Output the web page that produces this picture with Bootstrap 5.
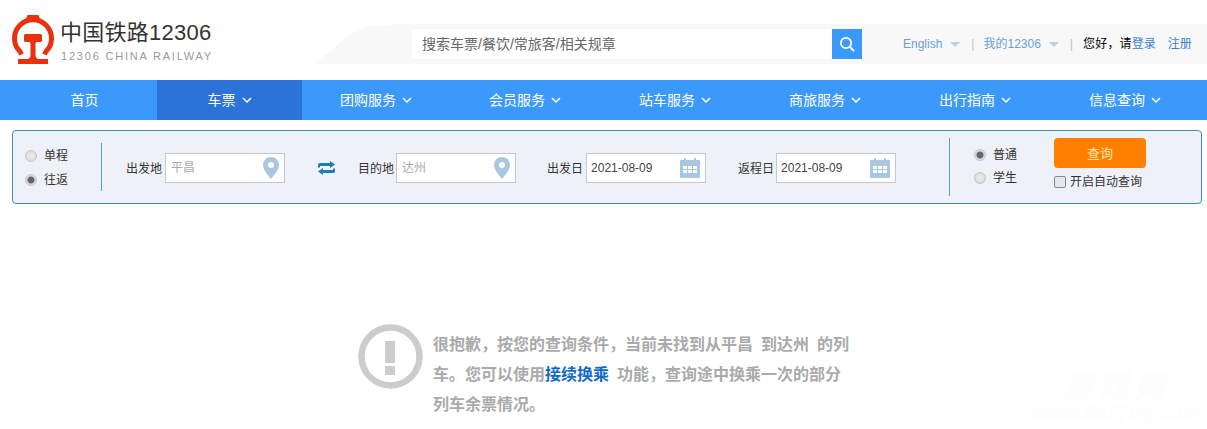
<!DOCTYPE html>
<html lang="zh">
<head>
<meta charset="utf-8">
<title>中国铁路12306</title>
<link href="https://cdn.jsdelivr.net/npm/bootstrap@5.3.0/dist/css/bootstrap.min.css" rel="stylesheet">
<style>
html,body{height:429px;overflow:hidden}
body{font-family:"Liberation Sans","Noto Sans CJK SC",sans-serif;font-size:12px;color:#333;background:#fff;position:relative}
.hdr{height:80px;padding-left:12px}
.brand-mark{width:42px;height:50px;flex:none;margin-top:15px}
.brand-txt{margin-left:7px;width:162px;flex:none;padding-top:20px}
.brand-cn{font-size:22px;line-height:26px;color:#333;letter-spacing:.25px;margin-left:-1px}
.brand-en{font-size:11px;line-height:14px;letter-spacing:1.8px;color:#9a9a9a;margin-top:3px;white-space:nowrap}
.band{margin-left:89px;flex:1;height:40px;padding-left:100px;position:relative}
.band-bg{position:absolute;inset:0;background:#f8f8f8;clip-path:polygon(0 100%,18px 68%,38px 25%,58px 5%,88px 0,100% 0,100% 100%)}
.srch{width:450px;height:30px;flex:none;margin-top:5px;position:relative}
.srch .form-control{height:30px;border:0;border-radius:3px 0 0 3px;font-size:14px;padding:0 10px;box-shadow:0 0 2px #eee}
.srch .form-control::placeholder{color:#666;opacity:1}
.srch .btn{width:30px;height:30px;padding:0;background:#3b99fc;border:0;border-radius:0;display:flex;align-items:center;justify-content:center}
.tools{font-size:12px;margin-left:41px;white-space:nowrap;height:40px;position:relative}
.tools a{color:#6b9fd4;text-decoration:none}
.tools a.lnk{color:#3b7fce}
.tri{display:inline-block;width:0;height:0;border:5px solid transparent;border-top:5px solid #bcd0e4;border-bottom:0;margin:0 11px 0 8px;vertical-align:1px}
.sep{color:#a9c7e4;margin-right:9px}
.sep2{margin-right:10px}
.hi{letter-spacing:.2px}
.mainnav{height:40px;background:#3b99fc;padding-left:12px;flex-wrap:nowrap}
.mainnav .nav-link{height:40px;line-height:40px;padding:0;color:#fff;font-size:14px;text-align:center;width:150px;flex:none;display:flex;justify-content:center;align-items:center;gap:6px}
.mainnav .w145{width:145px}
.mainnav .w148{width:148px}
.mainnav .nav-link.active{background:#2c72d9;color:#fff}
.panel{margin:10px 5px 0 12px;height:74px;background:#eef1f8;border:1px solid #3a90b0;border-radius:4px;color:#333}
.rd{appearance:none;width:12px;height:12px;border-radius:50%;border:1px solid #c4c4c4;background:radial-gradient(circle,#eee,#d6d6d6);margin:0 7px 0 0;flex:none}
.rd:checked{background:radial-gradient(circle,#666 0 3px,#ddd 4px)}
.rdline{height:24px}
.trip{margin:2px 0 0 12px;width:76px}
.vr-line{width:1px;background:#5a9fba;flex:none}
.v1{height:48px}
.v2{height:58px;margin-left:53px}
.lbl{margin:3px 3px 0 0;white-space:nowrap;color:#333}
.lbl.tight{margin-right:2px}
.fld{width:120px;height:30px;flex:none;background:#fff;border:1px solid #c8c8c8;font-size:12px;padding:0 5px;color:#444;margin-top:2px}
.fld .ph{color:#aaa}
.fld svg{flex:none}
.fld .dt{margin-left:-1px}
.m25{margin-left:24px}
.swap{margin:2px 23px 0 33px;flex:none}
.m31{margin-left:31px}
.m32{margin-left:32px}
.type{margin:-2px 0 0 24px;width:80px}
.type .rdline{height:23px}
.act{width:130px;margin-top:-5px}
.qbtn{width:92px;height:30px;padding:0;background:#ff8000;border:0;border-radius:4px;color:#ffe6a8;font-size:13px;line-height:32px}
.qbtn:hover{background:#ff8000;color:#ffe6a8}
.chk{appearance:none;width:12px;height:12px;border:1px solid #888;border-radius:2px;background:#e4e6ec;margin:0 4px 0 0}
.autoq{margin-top:5px;white-space:nowrap}
.empty{margin:120px 0 0 358px;width:500px;gap:10px}
.empty svg{flex:none}
.msg{font-family:"Liberation Serif","Noto Sans CJK SC",serif;font-size:16px;line-height:30px;font-weight:700;color:#aaa;margin-top:6px;width:423px;word-spacing:4px}
.msg a{color:#1168c9;text-decoration:none}
.wm{position:absolute;right:7px;bottom:6px;color:#fdfdfd;font-weight:700;font-style:italic;text-align:center;font-size:20px;line-height:20px}
.wm b{display:block;font-size:30px;line-height:32px;letter-spacing:6px}
</style>
</head>
<body>
<header class="hdr d-flex">
  <svg class="brand-mark" viewBox="0 0 42 50" aria-label="logo">
    <path d="M9.500 39.500L8 36.500A18.500 18.500 0 1 1 34 36.500L32.500 39.500" fill="none" stroke="#e8320f" stroke-width="5"/>
    <path d="M15.500 0h11l2 5h-15z" fill="#e8320f"/>
    <path d="M12 20.500q0-1.500 1.500-1.500h15q1.500 0 1.500 1.500v5q0 1.500-1.500 1.500h-3.500q-1.500 0-1.500 2v11q0 3 3 4h-11q3-1 3-4v-11q0-2-1.500-2h-3.500q-1.500 0-1.500-1.500z" fill="#e8320f"/>
    <path d="M6 44h30v5H6z" fill="#e8320f"/>
  </svg>
  <div class="brand-txt">
    <div class="brand-cn">中国铁路12306</div>
    <div class="brand-en">12306 CHINA RAILWAY</div>
  </div>
  <div class="band d-flex mt-4">
    <div class="band-bg"></div>
    <div class="srch input-group flex-nowrap">
      <input class="form-control" type="text" placeholder="搜索车票/餐饮/常旅客/相关规章">
      <button class="btn" type="button" aria-label="搜索">
        <svg width="16" height="16" viewBox="0 0 16 16" fill="none" stroke="#fff" stroke-width="1.800"><circle cx="7" cy="7" r="5.200"/><path d="M11 11l4 4"/></svg>
      </button>
    </div>
    <div class="tools d-flex align-items-center">
      <a href="#">English</a><i class="tri"></i><span class="sep">|</span>
      <a href="#">我的12306</a><i class="tri"></i><span class="sep sep2">|</span>
      <span class="text-black hi">您好，请</span><a class="lnk" href="#">登录</a><a class="lnk ms-2 ps-1" href="#">注册</a>
    </div>
  </div>
</header>

<nav class="nav mainnav">
  <a class="nav-link w145" href="#">首页</a>
  <a class="nav-link w145 active" href="#">车票 <svg width="10" height="6" viewBox="0 0 10 6" fill="none" stroke="#fff" stroke-width="1.500"><path d="M1 1l4 4 4-4"/></svg></a>
  <a class="nav-link w148" href="#">团购服务 <svg width="10" height="6" viewBox="0 0 10 6" fill="none" stroke="#fff" stroke-width="1.500"><path d="M1 1l4 4 4-4"/></svg></a>
  <a class="nav-link" href="#">会员服务 <svg width="10" height="6" viewBox="0 0 10 6" fill="none" stroke="#fff" stroke-width="1.500"><path d="M1 1l4 4 4-4"/></svg></a>
  <a class="nav-link" href="#">站车服务 <svg width="10" height="6" viewBox="0 0 10 6" fill="none" stroke="#fff" stroke-width="1.500"><path d="M1 1l4 4 4-4"/></svg></a>
  <a class="nav-link" href="#">商旅服务 <svg width="10" height="6" viewBox="0 0 10 6" fill="none" stroke="#fff" stroke-width="1.500"><path d="M1 1l4 4 4-4"/></svg></a>
  <a class="nav-link" href="#">出行指南 <svg width="10" height="6" viewBox="0 0 10 6" fill="none" stroke="#fff" stroke-width="1.500"><path d="M1 1l4 4 4-4"/></svg></a>
  <a class="nav-link" href="#">信息查询 <svg width="10" height="6" viewBox="0 0 10 6" fill="none" stroke="#fff" stroke-width="1.500"><path d="M1 1l4 4 4-4"/></svg></a>
</nav>

<form class="panel d-flex align-items-center">
  <div class="trip">
    <label class="rdline d-flex align-items-center"><input class="rd" type="radio" name="t">单程</label>
    <label class="rdline d-flex align-items-center"><input class="rd" type="radio" name="t" checked>往返</label>
  </div>
  <div class="vr-line v1"></div>
  <span class="lbl m25">出发地</span>
  <div class="fld d-flex align-items-center justify-content-between"><span class="ph">平昌</span>
    <svg width="16" height="22" viewBox="0 0 16 22"><path fill-rule="evenodd" d="M8 0a8 8 0 0 1 8 8c0 5-5 10-8 14C5 18 0 13 0 8a8 8 0 0 1 8-8zm0 5a3 3 0 1 0 0 6 3 3 0 0 0 0-6z" fill="#a9c7e0"/></svg></div>
  <svg class="swap" width="17" height="14" viewBox="0 0 17 14" fill="#1d80a8"><path d="M12 0l5 3.500-5 3.500V5H2v1.500H0V3.500Q0 2 2 2h10z"/><path d="M5 14L0 10.500 5 7v2h10V7.500h2v3q0 1.500-2 1.500H5z"/></svg>
  <span class="lbl tight">目的地</span>
  <div class="fld d-flex align-items-center justify-content-between"><span class="ph">达州</span>
    <svg width="16" height="22" viewBox="0 0 16 22"><path fill-rule="evenodd" d="M8 0a8 8 0 0 1 8 8c0 5-5 10-8 14C5 18 0 13 0 8a8 8 0 0 1 8-8zm0 5a3 3 0 1 0 0 6 3 3 0 0 0 0-6z" fill="#a9c7e0"/></svg></div>
  <span class="lbl m31">出发日</span>
  <div class="fld d-flex align-items-center justify-content-between"><span class="dt">2021-08-09</span>
    <svg width="20" height="20" viewBox="0 0 20 20"><path fill-rule="evenodd" d="M1 2h3V0h2v2h8V0h2v2h3a1 1 0 0 1 1 1v16a1 1 0 0 1-1 1H1a1 1 0 0 1-1-1V3a1 1 0 0 1 1-1zm2 6v3h4V8zm5 0v3h4V8zm5 0v3h4V8zM3 12v3h4v-3zm5 0v3h4v-3zm5 0v3h4v-3z" fill="#a9c7e0"/></svg></div>
  <span class="lbl tight m32">返程日</span>
  <div class="fld d-flex align-items-center justify-content-between"><span class="dt">2021-08-09</span>
    <svg width="20" height="20" viewBox="0 0 20 20"><path fill-rule="evenodd" d="M1 2h3V0h2v2h8V0h2v2h3a1 1 0 0 1 1 1v16a1 1 0 0 1-1 1H1a1 1 0 0 1-1-1V3a1 1 0 0 1 1-1zm2 6v3h4V8zm5 0v3h4V8zm5 0v3h4V8zM3 12v3h4v-3zm5 0v3h4v-3zm5 0v3h4v-3z" fill="#a9c7e0"/></svg></div>
  <div class="vr-line v2"></div>
  <div class="type">
    <label class="rdline d-flex align-items-center"><input class="rd" type="radio" name="p" checked>普通</label>
    <label class="rdline d-flex align-items-center"><input class="rd" type="radio" name="p">学生</label>
  </div>
  <div class="act">
    <button class="btn qbtn d-block" type="button">查询</button>
    <label class="autoq d-flex align-items-center"><input class="chk" type="checkbox">开启自动查询</label>
  </div>
</form>

<div class="empty d-flex">
  <svg width="65" height="65" viewBox="0 0 65 65"><circle cx="32.500" cy="32.500" r="29" fill="none" stroke="#ccc" stroke-width="6.500"/><path d="M27 17h10v22H27zM27 42h10v9H27z" fill="#ccc"/></svg>
  <p class="msg mb-0">很抱歉，按您的查询条件，当前未找到从平昌 到达州 的列车。您可以使用<a href="#">接续换乘</a> 功能，查询途中换乘一次的部分列车余票情况。</p>
</div>
<div class="wm"><b>游戏网</b>www.0827ug.com</div>
<script src="https://cdn.jsdelivr.net/npm/bootstrap@5.3.0/dist/js/bootstrap.bundle.min.js"></script>
</body>
</html>
